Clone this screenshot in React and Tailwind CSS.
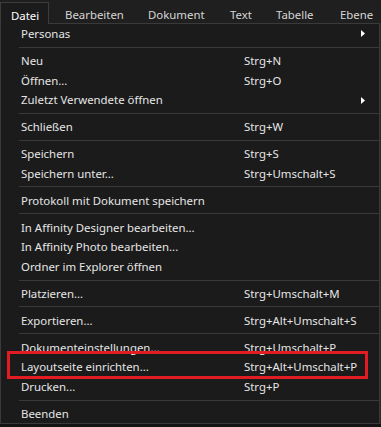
import React from "react";

const items = [
  { t: "row", l: "Personas", arrow: true },
  { t: "sep" },
  { t: "row", l: "Neu", s: "Strg+N" },
  { t: "row", l: "Öffnen...", s: "Strg+O" },
  { t: "row", l: "Zuletzt Verwendete öffnen", arrow: true },
  { t: "sep" },
  { t: "row", l: "Schließen", s: "Strg+W" },
  { t: "sep" },
  { t: "row", l: "Speichern", s: "Strg+S" },
  { t: "row", l: "Speichern unter...", s: "Strg+Umschalt+S" },
  { t: "sep" },
  { t: "row", l: "Protokoll mit Dokument speichern" },
  { t: "sep" },
  { t: "row", l: "In Affinity Designer bearbeiten..." },
  { t: "row", l: "In Affinity Photo bearbeiten..." },
  { t: "row", l: "Ordner im Explorer öffnen" },
  { t: "sep" },
  { t: "row", l: "Platzieren...", s: "Strg+Umschalt+M" },
  { t: "sep" },
  { t: "row", l: "Exportieren...", s: "Strg+Alt+Umschalt+S" },
  { t: "sep" },
  { t: "row", l: "Dokumenteinstellungen...", s: "Strg+Umschalt+P" },
  { t: "row", l: "Layoutseite einrichten...", s: "Strg+Alt+Umschalt+P", box: true },
  { t: "row", l: "Drucken...", s: "Strg+P" },
  { t: "sep" },
  { t: "row", l: "Beenden" },
];

function Arrow() {
  return (
    <svg width="4" height="7" viewBox="0 0 4 7" className="block">
      <path d="M0 0 L4 3.5 L0 7 Z" fill="#ffffff" />
    </svg>
  );
}

export default function App() {
  return (
    <div
      className="w-[381px] h-[427px] overflow-hidden bg-[#141414] text-[11.4px] leading-none"
      style={{ fontFamily: '"Noto Sans", "Open Sans", sans-serif' }}
    >
      <div className="h-[23px] bg-[#1f1f1f] flex items-end text-[#d6d6d6]">
        <div className="relative z-10 h-[22px] w-[49px] -mb-px border-t border-r border-l border-[#3c3c3c] bg-[#1b1b1b] flex items-center pt-[5px] pl-[10px] text-white">
          Datei
        </div>
        <div className="h-[22px] flex items-center pt-[5px] whitespace-nowrap">
          <span className="ml-[16px] w-[83px]">Bearbeiten</span>
          <span className="w-[82px]">Dokument</span>
          <span className="w-[46px]">Text</span>
          <span className="w-[64px]">Tabelle</span>
          <span>Ebene</span>
        </div>
      </div>
      <div className="flex">
        <div className="w-[380px] border border-[#3a3a3a] bg-[#1b1b1b] text-[#e6e6e6] flex flex-col">
          {items.map((it, i) =>
            it.t === "sep" ? (
              <div key={i} className="shrink-0 h-[7.2px] flex items-center pl-[18px]">
                <div className="h-px flex-1 bg-[#3a3a3a]" />
              </div>
            ) : (
              <div key={i} className="shrink-0 relative h-[19.7px] flex items-center pl-[20px] pr-[14px]">
                <span className="w-[223px] whitespace-nowrap">{it.l}</span>
                <span className="flex-1 whitespace-nowrap">{it.s || ""}</span>
                {it.arrow && <Arrow />}
                {it.box && (
                  <div className="absolute left-[6px] top-[-6px] w-[361px] h-[28px] border-[3px] border-[#e31c24]" />
                )}
              </div>
            )
          )}
        </div>
        <div className="flex-1 bg-[#2a2a2a]" />
      </div>
    </div>
  );
}
